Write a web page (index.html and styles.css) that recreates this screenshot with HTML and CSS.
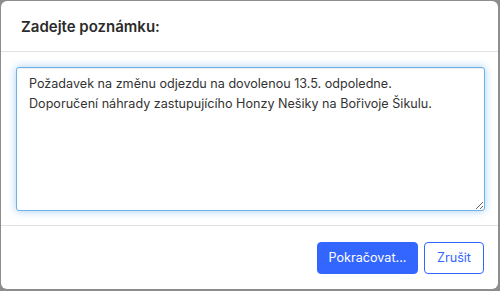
FILE: index.html
```html
<!DOCTYPE html>
<html lang="cs">
<head>
  <meta charset="UTF-8" />
  <meta name="viewport" content="width=device-width, initial-scale=1.0" />
  <title>Poznámka</title>
  <link rel="stylesheet" href="styles.css">
</head>
<body>
  <div class="modal">
    <div class="modal-header">
      <h3>Zadejte poznámku:</h3>
    </div>
    <div class="modal-body">
      <textarea class="note">Požadavek na změnu odjezdu na dovolenou 13.5. odpoledne.
Doporučení náhrady zastupujícího Honzy Nešiky na Bořivoje Šikulu.</textarea>
    </div>
    <div class="modal-footer">
      <button class="btn btn-primary">Pokračovat...</button>
      <button class="btn btn-outline">Zrušit</button>
    </div>
  </div>
</body>
</html>
```

FILE: styles.css
```css
html, body {
  height: 100%;
}

body {
  margin: 0;
  padding: 1px 2px 2px 1px;
  box-sizing: border-box;
  background-color: #8d8d8d;
  font-family: 'Inter', sans-serif;
  color: #333;
}

.modal {
  background-color: #fff;
  border-radius: 6px;
  height: 288px;
  display: flex;
  flex-direction: column;
}

.modal-header {
  height: 50px;
  padding: 0 20px;
  display: flex;
  align-items: center;
  border-bottom: 1px solid #e2e2e2;
}

.modal-header h3 {
  margin: 0;
  font-size: 15px;
  font-weight: 600;
  color: #2b2b2b;
}

.modal-body {
  padding: 15px 13px 14px 15px;
  border-bottom: 1px solid #e2e2e2;
}

.note {
  display: block;
  width: 100%;
  height: 144px;
  box-sizing: border-box;
  margin: 0;
  padding: 6px 12px;
  font-family: 'Inter', sans-serif;
  font-size: 12.6px;
  line-height: 20px;
  color: #333;
  border: 1px solid #6fb2ea;
  border-radius: 3px;
  outline: none;
  resize: vertical;
  box-shadow: inset 0 1px 1px rgba(0, 0, 0, 0.075), 0 0 8px rgba(102, 175, 233, 0.6);
}

.modal-footer {
  flex: 1;
  display: flex;
  justify-content: flex-end;
  align-items: center;
  gap: 6px;
  padding: 0 14px 0 15px;
}

.btn {
  height: 32px;
  padding: 0 10px;
  font-family: 'Inter', sans-serif;
  font-size: 12.6px;
  border-radius: 4px;
  cursor: pointer;
}

.btn-primary {
  width: 101px;
  background-color: #3366ff;
  color: #fff;
  border: 1px solid #3366ff;
}

.btn-outline {
  width: 60px;
  background-color: #fff;
  color: #3366ff;
  border: 1px solid #3366ff;
}
```
